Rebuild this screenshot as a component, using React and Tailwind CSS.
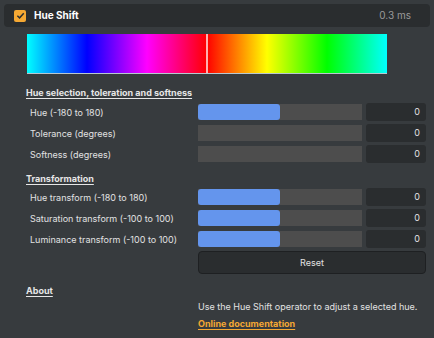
import React, { useState } from "react";

const font = { fontFamily: "Inter, 'Noto Sans', sans-serif" };

const Row = ({ label, fill, value }) => (
  <div className="flex items-center h-[18px] mb-[3px]">
    <div className="w-[198px] shrink-0 pl-[30px] text-[9px] text-[#e2e2e2] leading-none whitespace-nowrap">{label}</div>
    <div className="w-[164px] h-[16px] bg-[#4d4d4d] flex">
      {fill && <div className="w-[82px] h-full bg-[#6495ed] rounded-[3px]" />}
    </div>
    <div className="ml-[4px] w-[60px] h-[18px] rounded-[3px] bg-[#2a2d2f] flex items-center justify-end pr-[6px] text-[9px] text-[#e2e2e2]">
      {value}
    </div>
  </div>
);

const Heading = ({ children }) => (
  <div className="pl-[26px] text-[9px] font-bold underline underline-offset-2 text-[#e6e6e6] leading-none">
    {children}
  </div>
);

export default function App() {
  const [enabled, setEnabled] = useState(true);

  return (
    <div className="w-[434px] h-[338px] bg-[#373b3e] overflow-hidden pt-[4px]" style={font}>
      <div className="mx-[4px] h-[23px] rounded-[4px] bg-[#2a2d2f] flex items-center pl-[10px] pr-[19px]">
        <button
          onClick={() => setEnabled(!enabled)}
          className="w-[12px] h-[12px] rounded-[2px] bg-[#f5a833] flex items-center justify-center"
        >
          {enabled && (
            <svg width="9" height="9" viewBox="0 0 10 10">
              <path d="M1.5 5.2 L4 7.6 L8.6 2.4" stroke="#2a2d2f" strokeWidth="1.6" fill="none" />
            </svg>
          )}
        </button>
        <span className="ml-[8px] text-[10px] font-bold text-white">Hue Shift</span>
        <span className="ml-auto text-[10px] text-[#9a9a9a]">0.3 ms</span>
      </div>

      <div className="ml-[27px] mt-[7px] w-[360px] h-[40px] relative bg-[linear-gradient(to_right,#00ffff,#0000ff_16.67%,#ff00ff_33.33%,#ff0000_50%,#ffff00_66.67%,#00ff00_83.33%,#00ffff)] border-b border-[#b8c8d0]">
        <div className="absolute left-[179px] top-0 bottom-0 w-[2px] bg-[#ffb0b0]" />
      </div>

      <div className="mt-[14px]">
        <Heading>Hue selection, toleration and softness</Heading>
      </div>
      <div className="mt-[6px]">
        <Row label="Hue (-180 to 180)" fill value="0" />
        <Row label="Tolerance (degrees)" value="0" />
        <Row label="Softness (degrees)" value="0" />
      </div>

      <div className="mt-[11px]">
        <Heading>Transformation</Heading>
      </div>
      <div className="mt-[5px]">
        <Row label="Hue transform (-180 to 180)" fill value="0" />
        <Row label="Saturation transform (-100 to 100)" fill value="0" />
        <Row label="Luminance transform (-100 to 100)" fill value="0" />
        <div className="ml-[198px] w-[228px] h-[23px] rounded-[4px] bg-[#2a2d2f] border border-[#1e2022] flex items-center justify-center text-[9px] text-[#e2e2e2]">
          Reset
        </div>
      </div>

      <div className="mt-[12px]">
        <Heading>About</Heading>
      </div>
      <div className="ml-[198px] mt-[7px] text-[9px] text-[#e2e2e2] leading-none">
        Use the Hue Shift operator to adjust a selected hue.
      </div>
      <div className="ml-[198px] mt-[8px] text-[9px] font-bold underline underline-offset-2 text-[#f5a833] leading-none">
        Online documentation
      </div>
    </div>
  );
}
